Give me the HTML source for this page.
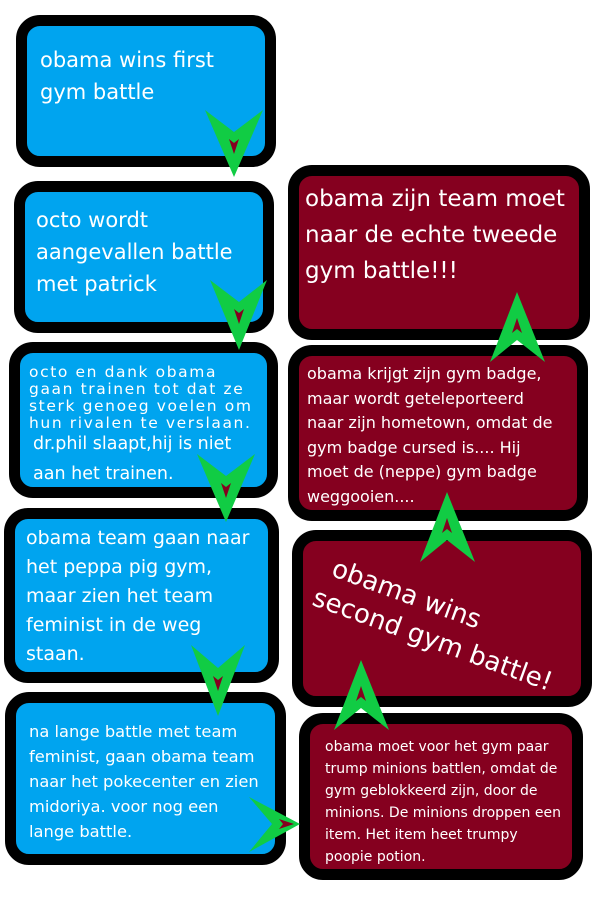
<!DOCTYPE html>
<html><head><meta charset="utf-8"><style>
html,body{margin:0;padding:0;background:#fff;width:605px;height:900px;overflow:hidden;position:relative;font-family:"DejaVu Sans","Liberation Sans",sans-serif;}
.b{position:absolute;box-sizing:border-box;border:11px solid #000;border-radius:24px;color:#fff;overflow:hidden}
.bl{background:#00a4ef}
.m{background:#85001f}
.t{position:absolute;line-height:1.45;white-space:nowrap}
svg{position:absolute;left:0;top:0}
</style></head><body>
<div class="b bl" style="left:16px;top:15px;width:260px;height:152px"><div class="t" style="left:13px;top:18px;font-size:21px;line-height:32px">obama wins first<br>gym battle</div></div>
<div class="b bl" style="left:14px;top:181px;width:260px;height:152px"><div class="t" style="left:11px;top:12px;font-size:21px;line-height:32px">octo wordt<br>aangevallen battle<br>met patrick</div></div>
<div class="b bl" style="left:9px;top:342px;width:269px;height:156px"><div class="t" style="left:9px;top:11px;font-size:15.5px;line-height:17px;letter-spacing:1.6px">octo en dank obama<br>gaan trainen tot dat ze<br>sterk genoeg voelen om<br>hun rivalen te verslaan.</div><div class="t" style="left:13px;top:76px;font-size:17.5px;line-height:30px">dr.phil slaapt,hij is niet<br>aan het trainen.</div></div>
<div class="b bl" style="left:4px;top:508px;width:275px;height:175px"><div class="t" style="left:11px;top:5px;font-size:19px;line-height:29px">obama team gaan naar<br>het peppa pig gym,<br>maar zien het team<br>feminist in de weg<br>staan.</div></div>
<div class="b bl" style="left:5px;top:692px;width:281px;height:173px"><div class="t" style="left:13px;top:16px;font-size:16.3px;line-height:25px">na lange battle met team<br>feminist, gaan obama team<br>naar het pokecenter en zien<br>midoriya. voor nog een<br>lange battle.</div></div>

<div class="b m" style="left:288px;top:165px;width:302px;height:175px"><div class="t" style="left:6px;top:5px;font-size:23px;line-height:36px">obama zijn team moet<br>naar de echte tweede<br>gym battle!!!</div></div>
<div class="b m" style="left:288px;top:345px;width:300px;height:176px"><div class="t" style="left:8px;top:6px;font-size:16px;line-height:24.5px">obama krijgt zijn gym badge,<br>maar wordt geteleporteerd<br>naar zijn hometown, omdat de<br>gym badge cursed is.... Hij<br>moet de (neppe) gym badge<br>weggooien....</div></div>
<div class="b m" style="left:292px;top:530px;width:300px;height:177px"><div class="t" style="left:28px;top:8px;font-size:26px;line-height:34px;transform:rotate(20deg);transform-origin:0 0">&nbsp;obama wins<br>second gym battle!</div></div>
<div class="b m" style="left:299px;top:713px;width:284px;height:167px"><div class="t" style="left:15px;top:12px;font-size:14px;line-height:22px">obama moet voor het gym paar<br>trump minions battlen, omdat de<br>gym geblokkeerd zijn, door de<br>minions. De minions droppen een<br>item. Het item heet trumpy<br>poopie potion.</div></div>

<svg width="605" height="900" viewBox="0 0 605 900">
<g fill="#11cc44">
<polygon points="205,110 234,132 263,110 234,177"/>
<polygon points="210,280 239,302 267,280 239,350"/>
<polygon points="197,454 226,476 255,454 226,522"/>
<polygon points="191,645 218,668 245,645 218,716"/>
<polygon points="249,797 272,824 249,852 300,824"/>
<polygon points="517,292 490,362 517,340 545,362"/>
<polygon points="447,492 420,562 447,540 475,562"/>
<polygon points="361,660 334,730 361,708 389,730"/>
</g>
<g fill="#85001f">
<polygon points="229,139 234,143 239,139 234,154"/>
<polygon points="234,309 239,313 244,309 239,324"/>
<polygon points="221,483 226,487 231,483 226,498"/>
<polygon points="213,676 218,680 223,676 218,691"/>
<polygon points="279,819 283,824 279,829 294,824"/>
<polygon points="517,318 512,333 517,329 522,333"/>
<polygon points="447,518 442,533 447,529 452,533"/>
<polygon points="361,686 356,701 361,697 366,701"/>
</g>
</svg>
</body></html>
